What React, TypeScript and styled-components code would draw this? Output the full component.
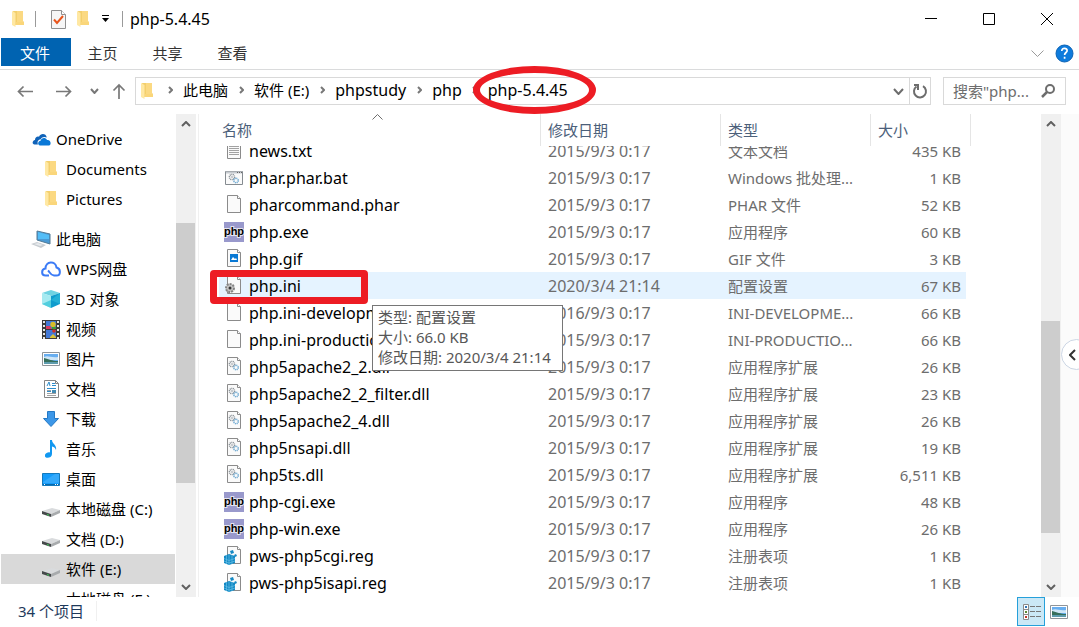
import React from "react";
import styled, { createGlobalStyle, css } from "styled-components";

const GlobalStyle = createGlobalStyle`
  *, *::before, *::after { box-sizing: border-box; }
  body { margin: 0; background: #fff; }
  body, button, input {
    font-family: "Noto Sans", "Noto Sans CJK SC", sans-serif;
    font-size: 15px;
    line-height: 20px;
    color: #000;
  }
`;

const plainButton = css`
  display: flex;
  align-items: center;
  justify-content: center;
  border: 0;
  padding: 0;
  background: transparent;
  cursor: pointer;
`;

const Window = styled.div`
  display: flex;
  flex-direction: column;
  height: 100vh;
  overflow: hidden;
  background: #fff;
`;

const TitleBar = styled.header`
  display: flex;
  align-items: center;
  height: 38px;
  padding: 0 3px 0 12px;
`;

const QuickAccess = styled.div`
  display: flex;
  align-items: center;
  gap: 11px;
`;

const QuickButton = styled.button<{ $indent?: boolean }>`
  ${plainButton}
  padding-left: ${(p) => (p.$indent ? 4 : 0)}px;
`;

const Divider = styled.span`
  width: 1px;
  height: 16px;
  background: #9a9a9a;
`;

const Title = styled.h1`
  flex: 1;
  margin: 0 0 0 7px;
  font-size: 16px;
  font-weight: 400;
  line-height: 20px;
`;

const CaptionButton = styled.button`
  ${plainButton}
  width: 58px;
  height: 38px;
`;

const Ribbon = styled.nav`
  display: flex;
  align-items: flex-start;
  height: 32px;
  padding-left: 1px;
  border-bottom: 1px solid #dadbdc;
`;

const Tab = styled.button<{ $file?: boolean }>`
  ${plainButton}
  width: ${(p) => (p.$file ? 70 : 65)}px;
  height: 28px;
  padding-top: 2px;
  padding-right: 2px;
  color: ${(p) => (p.$file ? "#fff" : "#333")};
  background: ${(p) => (p.$file ? "#0063b1" : "transparent")};
`;

const RibbonTools = styled.div`
  display: flex;
  align-items: center;
  gap: 11px;
  height: 30px;
  margin-left: auto;
  padding-right: 5px;
`;

const NavBar = styled.div`
  display: flex;
  align-items: center;
  gap: 12px;
  height: 44px;
  padding: 7px 13px 9px 17px;
`;

const HistoryButtons = styled.div`
  display: grid;
  grid-template-columns: 39px 34px 21px 16px;
  align-items: center;
  justify-items: start;
  margin-right: -4px;
`;

const Address = styled.div`
  display: flex;
  flex: 1;
  align-items: center;
  height: 28px;
  padding-left: 5px;
  border: 1px solid #d9d9d9;
`;

const Crumbs = styled.ol`
  display: flex;
  flex: 1;
  align-items: center;
  margin: 0;
  padding: 0 0 2px 4px;
  list-style: none;
`;

const Crumb = styled.li`
  display: flex;
  align-items: center;
`;

const CrumbLink = styled.a<{ $latin: boolean }>`
  position: relative;
  color: #000;
  font-size: ${(p) => (p.$latin ? 16 : 15)}px;
  text-decoration: none;
  white-space: nowrap;
`;

const CrumbArrow = styled.span`
  display: flex;
  justify-content: center;
  width: 26px;
`;

const EllipseMark = styled.span`
  position: absolute;
  z-index: 3;
  inset: -14px -28px -14px -15px;
  border: 7px solid #ed1c24;
  border-radius: 50%;
  pointer-events: none;
`;

const AddressButton = styled.button<{ $divided?: boolean }>`
  ${plainButton}
  width: 21px;
  height: 26px;
  border-left: ${(p) => (p.$divided ? "1px solid #d9d9d9" : "0")};
`;

const Search = styled.label`
  display: flex;
  align-items: center;
  width: 123px;
  height: 28px;
  padding: 0 10px 0 9px;
  border: 1px solid #d9d9d9;
`;

const SearchInput = styled.input`
  flex: 1;
  min-width: 0;
  padding: 0;
  border: 0;
  outline: 0;
  background: transparent;
  &::placeholder { color: #6d6d6d; opacity: 1; }
`;

const Body = styled.div`
  display: flex;
  flex: 1;
  min-height: 0;
`;

const Sidebar = styled.nav`
  width: 176px;
  padding: 10px 1px 0;
  overflow: hidden;
`;

const TreeItem = styled.a<{ $level: number; $selected?: boolean; $spaced?: boolean }>`
  display: flex;
  align-items: center;
  height: 30px;
  margin-top: ${(p) => (p.$spaced ? 10 : 0)}px;
  padding-left: ${(p) => (p.$level === 1 ? 40 : 30)}px;
  color: #000;
  background: ${(p) => (p.$selected ? "#d9d9d9" : "transparent")};
  text-decoration: none;
  white-space: nowrap;
`;

const TreeIcon = styled.span`
  display: flex;
  justify-content: center;
  width: 20px;
  margin-right: 5px;
`;

const Track = styled.div`
  display: flex;
  flex-direction: column;
  width: 20px;
  background: #f0f0f0;
`;

const TrackButton = styled.button`
  ${plainButton}
  height: 20px;
`;

const Segment = styled.div<{ $grow: number; $thumb?: boolean }>`
  flex: ${(p) => p.$grow} 1 0;
  margin-right: 1px;
  background: ${(p) => (p.$thumb ? "#cdcdcd" : "transparent")};
`;

const Content = styled.main`
  display: flex;
  flex: 1;
  min-width: 0;
  margin-left: 2px;
  border-left: 1px solid #f0f0f0;
`;

const FileTable = styled.table`
  display: flex;
  flex: 1;
  flex-direction: column;
  min-width: 0;
  overflow: hidden;
`;

const TableHead = styled.thead`
  display: block;
`;

const HeadRow = styled.tr`
  display: grid;
  grid-template-columns: 322px 180px 150px 100px;
  height: 32px;
  margin-left: 20px;
`;

const HeadCell = styled.th<{ $first?: boolean }>`
  position: relative;
  display: flex;
  align-items: center;
  padding: 0 0 0 ${(p) => (p.$first ? 3 : 7)}px;
  border-right: 1px solid #e5e5e5;
  color: #4c607a;
  font-weight: 400;
`;

const SortMark = styled.span`
  position: absolute;
  top: 0;
  left: 0;
  right: 4px;
  display: flex;
  justify-content: center;
`;

const TableBody = styled.tbody`
  display: block;
  flex: 1;
  min-height: 0;
  overflow: hidden;
`;

const FileRow = styled.tr<{ $hover?: boolean }>`
  position: relative;
  display: grid;
  grid-template-columns: 322px 180px 150px 95px;
  width: 747px;
  height: 27px;
  margin-left: 20px;
  background: ${(p) => (p.$hover ? "#e5f3ff" : "transparent")};
  &:first-child { margin-top: -9px; }
`;

const Cell = styled.td<{ $right?: boolean; $numeric?: boolean }>`
  padding: 4px 5px 3px 7px;
  color: #6d6d6d;
  font-size: ${(p) => (p.$numeric ? 16 : 15)}px;
  text-align: ${(p) => (p.$right ? "right" : "left")};
  white-space: nowrap;
`;

const NameCell = styled.td`
  display: flex;
  align-items: center;
  padding: 0 0 0 5px;
  font-size: 16px;
  white-space: nowrap;
`;

const FileIcon = styled.span`
  display: flex;
  justify-content: center;
  width: 20px;
  margin-right: 5px;
`;

const RectMark = styled.span`
  position: absolute;
  z-index: 2;
  top: -2px;
  bottom: -5px;
  left: -9px;
  width: 158px;
  border: 7px solid #ed1c24;
  border-radius: 4px;
  pointer-events: none;
`;

const Tooltip = styled.div`
  position: absolute;
  z-index: 4;
  top: 33px;
  left: 153px;
  min-width: 191px;
  padding: 1px 5px 3px;
  border: 1px solid #767676;
  background: #fff;
  color: #575757;
  font-size: 15px;
`;

const SidePanel = styled.aside`
  position: relative;
  width: 18px;
  overflow: hidden;
  background: #fbfbfb;
`;

const Bubble = styled.button`
  ${plainButton}
  position: absolute;
  top: 225px;
  left: 0;
  width: 31px;
  height: 31px;
  padding-right: 8px;
  border: 1px solid #ccd6e4;
  border-radius: 50%;
  background: #fff;
`;

const StatusBar = styled.footer`
  display: flex;
  align-items: center;
  height: 30px;
  padding: 0 6px 2px 18px;
  color: #1e395b;
`;

const Count = styled.span`
  padding-right: 12px;
  border-right: 1px solid #f0f0f0;
`;

const ViewButtons = styled.div`
  display: flex;
  align-self: flex-start;
  margin-left: auto;
`;

const ViewButton = styled.button<{ $active?: boolean }>`
  ${plainButton}
  width: 28px;
  height: 29px;
  padding-left: ${(p) => (p.$active ? 2 : 0)}px;
  border: 1px solid ${(p) => (p.$active ? "#26a0da" : "transparent")};
  background: ${(p) => (p.$active ? "#cbe8f6" : "transparent")};
`;

type ChevronProps = { dir: "up" | "down" | "left" | "right"; w?: number; h?: number; color?: string; stroke?: number };

const Chevron = ({ dir, w = 10, h = 6, color = "#606060", stroke = 2 }: ChevronProps) => {
  const m = stroke / 2;
  const points = {
    up: `${m},${h - m} ${w / 2},${m} ${w - m},${h - m}`,
    down: `${m},${m} ${w / 2},${h - m} ${w - m},${m}`,
    left: `${w - m},${m} ${m},${h / 2} ${w - m},${h - m}`,
    right: `${m},${m} ${w - m},${h / 2} ${m},${h - m}`,
  }[dir];
  return (
    <svg width={w} height={h} fill="none" stroke={color} strokeWidth={stroke} aria-hidden>
      <polyline points={points} />
    </svg>
  );
};

const Folder = () => (
  <svg width="12" height="16" viewBox="0 0 12 16" aria-hidden>
    <path d="M1 0h10v10l1 1v3H3z" fill="#f3cf6c" />
    <path d="M5 0h6v11H5z" fill="#fbd982" />
    <path d="M4 11h8v3H4z" fill="#fad67a" />
    <path d="M0 0l3.500 2v14L0 14z" fill="#ffe8a3" />
  </svg>
);

const CheckDoc = () => (
  <svg width="15" height="19" viewBox="0 0 15 19" aria-hidden>
    <path d="M.5.5h10l4 4v14H.5z" fill="#f6f6f6" stroke="#909090" />
    <path d="M10.500.5v4h4" fill="#fff" stroke="#909090" />
    <path d="M3 9.500l3 3.500 6-7" fill="none" stroke="#e8551c" strokeWidth="2" />
  </svg>
);

const Arrow = ({ dir }: { dir: "left" | "right" | "up" }) => {
  const d = {
    left: "M16 8.500H1M6.500 3.500l-5 5 5 5",
    right: "M0 8.500h15M9.500 3.500l5 5-5 5",
    up: "M8 16V2M2.500 7.500L8 2l5.500 5.500",
  }[dir];
  return (
    <svg width="16" height="16" fill="none" stroke="#787878" strokeWidth="1.700" aria-hidden>
      <path d={d} />
    </svg>
  );
};

const Refresh = () => (
  <svg width="16" height="16" fill="none" stroke="#6d6d6d" strokeWidth="2" aria-hidden>
    <path d="M11 3.200a6 6 0 1 1-6.500.3" />
    <path d="M2 2h4v5" />
  </svg>
);

const Magnifier = () => (
  <svg width="14" height="14" fill="none" stroke="#6d6d6d" strokeWidth="2" aria-hidden>
    <circle cx="9" cy="5" r="4" />
    <path d="M6 8l-5 5" strokeWidth="2.500" />
  </svg>
);

const OneDrive = () => (
  <svg width="19" height="13" viewBox="0 0 19 13" aria-hidden>
    <path d="M2.500 11.500C0 11.500 0 7.500 3 7c0-2.500 2-4 4-3.300C8.500 0 14 0 14.800 4.500 11.500 3 9 5 8.500 6.500 6 6.500 5 9 6 11.500z" fill="#0f62b8" />
    <path d="M8 12.500c-2.500 0-2.600-4.500.6-4.800C9.300 4.500 13.500 4 15 7c3.500-.8 5 4.500 2 5.500z" fill="#0a78d7" />
  </svg>
);

const Computer = () => (
  <svg width="20" height="18" viewBox="0 0 20 18" aria-hidden>
    <path d="M6 1l13 3v10L6 10z" fill="#4a9ad4" stroke="#527a96" />
    <path d="M7 2l11 3v4L7 9z" fill="#53bdf7" />
    <path d="M0 14l6-2 9 3-5 3z" fill="#c7ccd1" />
    <path d="M3 14l4-1 5 2-3 1z" fill="#e6e9ec" />
  </svg>
);

const WpsCloud = () => (
  <svg width="20" height="16" viewBox="0 0 20 16" fill="none" stroke="#3b7bf6" strokeWidth="2" aria-hidden>
    <path d="M8 14.500H4.500C0 14.500 0 8 4.500 7.500 4.500 0 14.500-.5 15.500 6.500c4.500 1 4.500 8 0 8H13c-3.500-.3-4-3.300-6-5" />
  </svg>
);

const Cube = () => (
  <svg width="18" height="18" viewBox="0 0 18 18" aria-hidden>
    <path d="M0 3l9-3 9 3-9 3z" fill="#6fd3e2" />
    <path d="M0 3l9 3v12l-9-4z" fill="#a5eaf1" />
    <path d="M18 3L9 6v12l9-4z" fill="#0f9ccd" />
    <path d="M0 14l9-4v8z" fill="#52cede" />
    <path d="M18 3v11l-9-4z" fill="#23b0d6" />
  </svg>
);

const Film = () => (
  <svg width="18" height="19" viewBox="0 0 18 19" aria-hidden>
    <path d="M0 0h18v19H0z" fill="#3a3a3a" />
    <path d="M4 1h10v8H4zM4 10h10v8H4z" fill="#4278d6" />
    <path d="M4 6h4l2 3H4z" fill="#d83a62" />
    <circle cx="11" cy="4.500" r="2.700" fill="#d8bb29" />
    <path d="M10 7h4v2h-4z" fill="#3c9a3a" />
    <circle cx="12" cy="11" r="1.800" fill="#cf3127" />
    <path d="M8 17l3-3 3 3v1H8z" fill="#d9c238" />
    <path d="M2 1v18M16 1v18" stroke="#e8e8e8" strokeWidth="2" strokeDasharray="2 2" />
  </svg>
);

const Picture = () => (
  <svg width="18" height="14" viewBox="0 0 18 14" aria-hidden>
    <path d="M.5.5h17v13H.5z" fill="#fff" stroke="#8f9499" />
    <path d="M2 2h14v10H2z" fill="#68aef0" />
    <path d="M2 5c4-2 7 1 14 0v3H2z" fill="#cfe6f7" />
    <path d="M2 6c5 1 8 3 14 3v1H2z" fill="#376f5b" />
    <path d="M2 10h14v2H2z" fill="#5e9cae" />
  </svg>
);

const DocumentIcon = () => (
  <svg width="15" height="18" viewBox="0 0 15 18" aria-hidden>
    <path d="M.5.5h11l3 3v14H.5z" fill="#fff" stroke="#858585" />
    <path d="M11.500.5v3h3" fill="none" stroke="#858585" />
    <path d="M3 6l2-4 1 4M8 3.500h3M8 5.500h4M3 8.500h9M3 11.500h4" stroke="#2d8dcc" fill="none" />
    <path d="M3 13.500h9M3 15.500h9M3 10.500h4" stroke="#a0a0a0" />
    <path d="M8 10h4v3H8z" fill="#438bb2" />
  </svg>
);

const Download = () => (
  <svg width="18" height="18" viewBox="0 0 18 18" aria-hidden>
    <path d="M5.500 1.500h7v7h4L9 16.500 1.500 8.500h4z" fill="#3c97e8" stroke="#2378c5" />
  </svg>
);

const Music = () => (
  <svg width="12" height="18" viewBox="0 0 12 18" aria-hidden>
    <path d="M5 0h2c0 4 5 4.500 4 10-1-3-3-3.500-4-3.500V14c0 4-6 5-7 2.500S3 11.500 5 12.500z" fill="#1298f0" />
  </svg>
);

const Desktop = () => (
  <svg width="18" height="13" viewBox="0 0 18 13" aria-hidden>
    <path d="M.5.5h17v12H.5z" fill="#159bfa" stroke="#1379bd" />
    <path d="M1 9L13 1h4v9H1z" fill="#34a9fb" />
    <path d="M1 11.500h16" stroke="#0868a9" />
    <path d="M2 11.500h1M13 11.500h1M15 11.500h1" stroke="#fff" />
  </svg>
);

const Drive = () => (
  <svg width="18" height="16" viewBox="0 0 18 16" aria-hidden>
    <path d="M0 10l10-3 8 2-9 4z" fill="#d9dbdd" />
    <path d="M0 10l9 3v3l-9-3z" fill="#45494b" />
    <path d="M9 13l9-4v3l-9 4z" fill="#a8abad" />
    <path d="M5 13l2 .7v1L5 14z" fill="#39d152" />
  </svg>
);

const Page = ({ children }: { children?: React.ReactNode }) => (
  <svg width="20" height="19" viewBox="0 0 20 19" aria-hidden>
    <path d="M3.500.5h10l3 3v14h-13z" fill="#fafafa" stroke="#8b8b8b" />
    <path d="M13.500.5v3h3" fill="#fff" stroke="#8b8b8b" />
    {children}
  </svg>
);

const Cogs = ({ x, y }: { x: number; y: number }) => (
  <g fill="none">
    <circle cx={x} cy={y} r="2.600" stroke="#8c9399" strokeWidth="1.500" strokeDasharray="1 .6" />
    <circle cx={x} cy={y} r=".8" fill="#8c9399" />
    <circle cx={x + 4} cy={y + 3.5} r="2.200" stroke="#6ba7d0" strokeWidth="1.500" strokeDasharray="1 .6" />
  </g>
);

const PhpIcon = () => (
  <svg width="20" height="20" viewBox="0 0 20 20" aria-hidden>
    <path d="M0 0h20v20H0z" fill="#9999cc" />
    <text
      x="10"
      y="13"
      textAnchor="middle"
      fontFamily="Liberation Sans, sans-serif"
      fontSize="11"
      fontWeight="700"
      fill="#000"
      stroke="#e4e4f0"
      strokeWidth="2"
      paintOrder="stroke"
    >
      php
    </text>
  </svg>
);

type Kind = "txt" | "bat" | "page" | "php" | "gif" | "ini" | "dll" | "reg";

const KindIcon = ({ kind }: { kind: Kind }) => {
  switch (kind) {
    case "php":
      return <PhpIcon />;
    case "bat":
      return (
        <svg width="20" height="18" viewBox="0 0 20 18" aria-hidden>
          <path d="M1.500 2.500h17v13h-17z" fill="#fafafa" stroke="#858b90" />
          <path d="M2 3.500h16" stroke="#c6cbd0" strokeWidth="2" />
          <path d="M13 3.500h1M15 3.500h1M17 3.500h1" stroke="#666" />
          <Cogs x={8} y={8} />
        </svg>
      );
    case "txt":
      return (
        <Page>
          <path d="M5 5.500h10M5 7.500h10M5 9.500h10M5 11.500h10M5 13.500h10" stroke="#a2a2a2" />
        </Page>
      );
    case "gif":
      return (
        <Page>
          <path d="M6 5h8v8H6z" fill="#0878d4" />
          <path d="M7 11l2-3 2 2 1-1 1 2z" fill="#fff" />
        </Page>
      );
    case "ini":
      return (
        <Page>
          <circle cx="6" cy="12" r="4" fill="#c4c4c4" stroke="#858585" strokeWidth="2" strokeDasharray="2 1" />
          <circle cx="6" cy="12" r="1.500" fill="#333" />
        </Page>
      );
    case "dll":
      return (
        <Page>
          <Cogs x={8} y={7} />
        </Page>
      );
    case "reg":
      return (
        <Page>
          <path d="M0 10l5-2 6 2v7l-6 2-5-2z" fill="#1489c4" />
          <path d="M0 12.500l5 2 6-2M2.500 9v9M5 9v10M8 9v9M0 15l5 2 6-2" stroke="#66c0e6" strokeWidth=".7" fill="none" />
          <path d="M6 5l3-1 1 3-3 1zM10 9l2-1 1 2-2 1z" fill="#1489c4" />
        </Page>
      );
    default:
      return <Page />;
  }
};

const crumbs = [
  { label: "此电脑", latin: false },
  { label: "软件 (E:)", latin: false },
  { label: "phpstudy", latin: true },
  { label: "php", latin: true },
  { label: "php-5.4.45", latin: true },
];

type TreeNode = { label: string; icon: React.ReactNode; level: number; selected?: boolean; spaced?: boolean };

const tree: TreeNode[] = [
  { label: "OneDrive", icon: <OneDrive />, level: 0 },
  { label: "Documents", icon: <Folder />, level: 1 },
  { label: "Pictures", icon: <Folder />, level: 1 },
  { label: "此电脑", icon: <Computer />, level: 0, spaced: true },
  { label: "WPS网盘", icon: <WpsCloud />, level: 1 },
  { label: "3D 对象", icon: <Cube />, level: 1 },
  { label: "视频", icon: <Film />, level: 1 },
  { label: "图片", icon: <Picture />, level: 1 },
  { label: "文档", icon: <DocumentIcon />, level: 1 },
  { label: "下载", icon: <Download />, level: 1 },
  { label: "音乐", icon: <Music />, level: 1 },
  { label: "桌面", icon: <Desktop />, level: 1 },
  { label: "本地磁盘 (C:)", icon: <Drive />, level: 1 },
  { label: "文档 (D:)", icon: <Drive />, level: 1 },
  { label: "软件 (E:)", icon: <Drive />, level: 1, selected: true },
  { label: "本地磁盘 (F:)", icon: null, level: 1 },
];

type FileEntry = { name: string; kind: Kind; date: string; type: string; size: string };

const stamp = "2015/9/3 0:17";

const files: FileEntry[] = [
  { name: "news.txt", kind: "txt", date: stamp, type: "文本文档", size: "435 KB" },
  { name: "phar.phar.bat", kind: "bat", date: stamp, type: "Windows 批处理...", size: "1 KB" },
  { name: "pharcommand.phar", kind: "page", date: stamp, type: "PHAR 文件", size: "52 KB" },
  { name: "php.exe", kind: "php", date: stamp, type: "应用程序", size: "60 KB" },
  { name: "php.gif", kind: "gif", date: stamp, type: "GIF 文件", size: "3 KB" },
  { name: "php.ini", kind: "ini", date: "2020/3/4 21:14", type: "配置设置", size: "67 KB" },
  { name: "php.ini-development", kind: "page", date: "2016/9/3 0:17", type: "INI-DEVELOPME...", size: "66 KB" },
  { name: "php.ini-production", kind: "page", date: stamp, type: "INI-PRODUCTIO...", size: "66 KB" },
  { name: "php5apache2_2.dll", kind: "dll", date: stamp, type: "应用程序扩展", size: "26 KB" },
  { name: "php5apache2_2_filter.dll", kind: "dll", date: stamp, type: "应用程序扩展", size: "23 KB" },
  { name: "php5apache2_4.dll", kind: "dll", date: stamp, type: "应用程序扩展", size: "26 KB" },
  { name: "php5nsapi.dll", kind: "dll", date: stamp, type: "应用程序扩展", size: "19 KB" },
  { name: "php5ts.dll", kind: "dll", date: stamp, type: "应用程序扩展", size: "6,511 KB" },
  { name: "php-cgi.exe", kind: "php", date: stamp, type: "应用程序", size: "48 KB" },
  { name: "php-win.exe", kind: "php", date: stamp, type: "应用程序", size: "26 KB" },
  { name: "pws-php5cgi.reg", kind: "reg", date: stamp, type: "注册表项", size: "1 KB" },
  { name: "pws-php5isapi.reg", kind: "reg", date: stamp, type: "注册表项", size: "1 KB" },
];

const ScrollBar = ({ before, thumb, after }: { before: number; thumb: number; after: number }) => (
  <Track>
    <TrackButton aria-label="向上滚动">
      <Chevron dir="up" />
    </TrackButton>
    <Segment $grow={before} />
    <Segment $grow={thumb} $thumb />
    <Segment $grow={after} />
    <TrackButton aria-label="向下滚动">
      <Chevron dir="down" />
    </TrackButton>
  </Track>
);

export default function App() {
  return (
    <Window>
      <GlobalStyle />
      <TitleBar>
        <QuickAccess>
          <Folder />
          <Divider />
          <QuickButton $indent aria-label="属性">
            <CheckDoc />
          </QuickButton>
          <QuickButton aria-label="新建文件夹">
            <Folder />
          </QuickButton>
          <QuickButton aria-label="自定义快速访问工具栏">
            <svg width="11" height="8" viewBox="0 0 11 8" aria-hidden>
              <path d="M2 .5h7" stroke="#000" />
              <path d="M2 3h7L5.500 7z" fill="#000" />
            </svg>
          </QuickButton>
          <Divider />
        </QuickAccess>
        <Title>php-5.4.45</Title>
        <CaptionButton aria-label="最小化">
          <svg width="12" height="13" stroke="#000" aria-hidden>
            <path d="M0 5.500h12" />
          </svg>
        </CaptionButton>
        <CaptionButton aria-label="最大化">
          <svg width="12" height="12" stroke="#000" fill="none" aria-hidden>
            <path d="M.5.5h11v11H.5z" />
          </svg>
        </CaptionButton>
        <CaptionButton aria-label="关闭">
          <svg width="12" height="12" stroke="#000" aria-hidden>
            <path d="M0 0l12 12M12 0L0 12" />
          </svg>
        </CaptionButton>
      </TitleBar>

      <Ribbon>
        <Tab $file>文件</Tab>
        <Tab>主页</Tab>
        <Tab>共享</Tab>
        <Tab>查看</Tab>
        <RibbonTools>
          <QuickButton aria-label="展开功能区">
            <Chevron dir="down" w={13} h={7} color="#9a9a9a" stroke={1} />
          </QuickButton>
          <QuickButton aria-label="帮助">
            <svg width="19" height="19" viewBox="0 0 19 19" aria-hidden>
              <circle cx="9.500" cy="9.500" r="8.500" fill="#0e7bdc" stroke="#0b62b4" />
              <path d="M6.800 7c0-3.700 5.600-3.300 5.300-.2-.2 1.700-2.500 1.900-2.500 4.200M9.600 12.800v2" fill="none" stroke="#fff" strokeWidth="1.700" />
            </svg>
          </QuickButton>
        </RibbonTools>
      </Ribbon>

      <NavBar>
        <HistoryButtons>
          <QuickButton aria-label="后退"><Arrow dir="left" /></QuickButton>
          <QuickButton aria-label="前进"><Arrow dir="right" /></QuickButton>
          <QuickButton aria-label="最近浏览的位置">
            <Chevron dir="down" w={9} h={6} color="#787878" />
          </QuickButton>
          <QuickButton aria-label="上移"><Arrow dir="up" /></QuickButton>
        </HistoryButtons>
        <Address>
          <Folder />
          <Crumbs>
            {crumbs.map(({ label, latin }, i) => (
              <Crumb key={label}>
                <CrumbArrow>
                  <Chevron dir="right" w={5} h={8} color="#787878" />
                </CrumbArrow>
                <CrumbLink href="#" $latin={latin}>
                  {label}
                  {i === crumbs.length - 1 && <EllipseMark />}
                </CrumbLink>
              </Crumb>
            ))}
          </Crumbs>
          <AddressButton aria-label="以前的位置">
            <Chevron dir="down" w={11} h={7} color="#6d6d6d" />
          </AddressButton>
          <AddressButton $divided aria-label="刷新">
            <Refresh />
          </AddressButton>
        </Address>
        <Search>
          <SearchInput type="text" aria-label="搜索" placeholder={'搜索"php...'} />
          <Magnifier />
        </Search>
      </NavBar>

      <Body>
        <Sidebar>
          {tree.map((node) => (
            <TreeItem key={node.label} href="#" $level={node.level} $selected={node.selected} $spaced={node.spaced}>
              <TreeIcon>{node.icon}</TreeIcon>
              {node.label}
            </TreeItem>
          ))}
        </Sidebar>
        <ScrollBar before={89} thumb={260} after={94} />
        <Content>
          <FileTable>
            <TableHead>
              <HeadRow>
                <HeadCell $first>
                  名称
                  <SortMark>
                    <Chevron dir="up" w={11} h={6} color="#6d6d6d" stroke={1} />
                  </SortMark>
                </HeadCell>
                <HeadCell>修改日期</HeadCell>
                <HeadCell>类型</HeadCell>
                <HeadCell>大小</HeadCell>
              </HeadRow>
            </TableHead>
            <TableBody>
              {files.map((file) => {
                const hovered = file.name === "php.ini";
                return (
                  <FileRow key={file.name} $hover={hovered}>
                    <NameCell>
                      <FileIcon>
                        <KindIcon kind={file.kind} />
                      </FileIcon>
                      {file.name}
                      {hovered && (
                        <>
                          <RectMark />
                          <Tooltip role="tooltip">
                            类型: 配置设置
                            <br />
                            大小: 66.0 KB
                            <br />
                            修改日期: 2020/3/4 21:14
                          </Tooltip>
                        </>
                      )}
                    </NameCell>
                    <Cell $numeric>{file.date}</Cell>
                    <Cell>{file.type}</Cell>
                    <Cell $right>{file.size}</Cell>
                  </FileRow>
                );
              })}
            </TableBody>
          </FileTable>
          <ScrollBar before={187} thumb={212} after={44} />
          <SidePanel>
            <Bubble aria-label="展开窗格">
              <Chevron dir="left" w={7} h={12} color="#333" />
            </Bubble>
          </SidePanel>
        </Content>
      </Body>

      <StatusBar>
        <Count>34 个项目</Count>
        <ViewButtons>
          <ViewButton $active aria-label="详细信息">
            <svg width="18" height="16" viewBox="0 0 18 16" aria-hidden>
              <path d="M.5.5h5v15h-5zM.5 5.500h5M.5 10.500h5" fill="#fff" stroke="#8a8a8a" />
              <path d="M7 2.500h5M13 2.500h5M7 7.500h5M13 7.500h5M7 12.500h5M13 12.500h5" stroke="#777" />
              <path d="M2 2h2v2H2z" fill="#2f75b5" />
              <path d="M2 7h2v2H2z" fill="#5a8a35" />
              <path d="M2 12h2v2H2z" fill="#c2352b" />
            </svg>
          </ViewButton>
          <ViewButton aria-label="大缩略图">
            <Picture />
          </ViewButton>
        </ViewButtons>
      </StatusBar>
    </Window>
  );
}
